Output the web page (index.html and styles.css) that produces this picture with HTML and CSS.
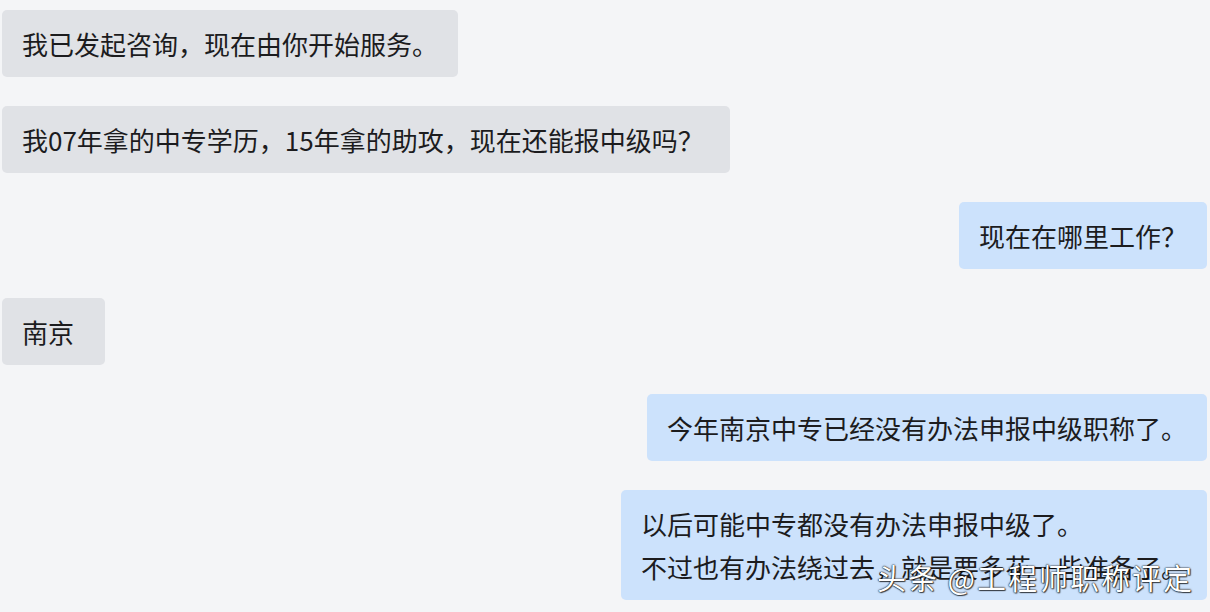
FILE: index.html
```html
<!DOCTYPE html>
<html lang="zh-CN">
<head>
  <meta charset="UTF-8" />
  <title>咨询记录</title>
  <link rel="stylesheet" href="styles.css">
</head>
<body>

  <!-- 聊天记录 -->
  <div class="chat">
    <div class="msg left">我已发起咨询，现在由你开始服务。</div>
    <div class="msg left wide">我07年拿的中专学历，15年拿的助攻，现在还能报中级吗？</div>
    <div class="msg right">现在在哪里工作？</div>
    <div class="msg left short">南京</div>
    <div class="msg right">今年南京中专已经没有办法申报中级职称了。</div>
    <div class="msg right">以后可能中专都没有办法申报中级了。<br>不过也有办法绕过去，就是要多花一些准备了。</div>
  </div>

  <!-- 水印 -->
  <div class="watermark">头条 @工程师职称评定</div>

</body>
</html>
```

FILE: styles.css
```css
/* 聊天截图 */
body {
  margin: 0;
  padding: 0;
  background: #f4f5f7;
  font-family: "Noto Sans CJK SC", "Noto Sans", sans-serif;
  color: #1c1c1e;
  width: 1210px;
  height: 612px;
  overflow: hidden;
  position: relative;
}

.chat {
  display: flex;
  flex-direction: column;
  gap: 29px;
  padding: 10px 3px 0 2px;
}

.msg {
  font-size: 26px;
  line-height: 43px;
  padding: 12px 20px;
  border-radius: 5px;
  max-width: 900px;
  white-space: nowrap;
}

.msg.left {
  align-self: flex-start;
  background: #e0e2e6;
}

.msg.right {
  align-self: flex-end;
  background: #cce2fc;
}

.msg.wide {
  padding-right: 26px;
}

.msg.short {
  min-width: 103px;
  box-sizing: border-box;
}

.watermark {
  position: absolute;
  left: 877px;
  top: 556px;
  font-size: 29px;
  line-height: 42px;
  letter-spacing: 2px;
  color: #ffffff;
  text-shadow: 0 0 2px rgba(0,0,0,0.9), 0 0 1px #000, 1px 1px 1px rgba(0,0,0,0.6);
  white-space: nowrap;
}
```
